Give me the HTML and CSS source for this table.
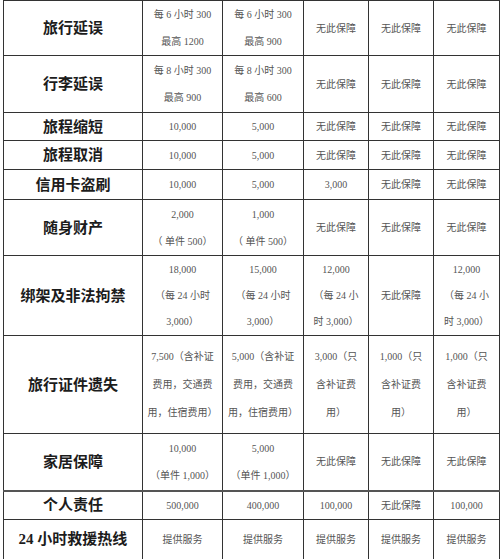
FILE: index.html
```html
<!DOCTYPE html>
<html lang="zh">
<head>
<meta charset="utf-8">
<link rel="stylesheet" href="styles.css">
</head>
<body>
<table class="plan">
  <colgroup>
    <col class="c1"><col class="c2"><col class="c3"><col class="c4"><col class="c5"><col class="c6">
  </colgroup>
  <tbody>
    <tr class="r1">
      <th>旅行延误</th>
      <td>每 6 小时 300<br>最高 1200</td>
      <td>每 6 小时 300<br>最高 900</td>
      <td>无此保障</td><td>无此保障</td><td>无此保障</td>
    </tr>
    <tr class="r2">
      <th>行李延误</th>
      <td>每 8 小时 300<br>最高 900</td>
      <td>每 8 小时 300<br>最高 600</td>
      <td>无此保障</td><td>无此保障</td><td>无此保障</td>
    </tr>
    <tr class="r3">
      <th>旅程缩短</th>
      <td>10,000</td><td>5,000</td>
      <td>无此保障</td><td>无此保障</td><td>无此保障</td>
    </tr>
    <tr class="r4">
      <th>旅程取消</th>
      <td>10,000</td><td>5,000</td>
      <td>无此保障</td><td>无此保障</td><td>无此保障</td>
    </tr>
    <tr class="r5">
      <th>信用卡盗刷</th>
      <td>10,000</td><td>5,000</td><td>3,000</td>
      <td>无此保障</td><td>无此保障</td>
    </tr>
    <tr class="r6">
      <th>随身财产</th>
      <td>2,000<br>（ 单件 500）</td>
      <td>1,000<br>（ 单件 500）</td>
      <td>无此保障</td><td>无此保障</td><td>无此保障</td>
    </tr>
    <tr class="r7">
      <th>绑架及非法拘禁</th>
      <td>18,000<br>（每 24 小时<br>3,000）</td>
      <td>15,000<br>（每 24 小时<br>3,000）</td>
      <td>12,000<br>（每 24 小<br>时 3,000）</td>
      <td>无此保障</td>
      <td>12,000<br>（每 24 小<br>时 3,000）</td>
    </tr>
    <tr class="r8">
      <th>旅行证件遗失</th>
      <td>7,500（含补证<br>费用，交通费<br>用，住宿费用）</td>
      <td>5,000（含补证<br>费用，交通费<br>用，住宿费用）</td>
      <td>3,000（只<br>含补证费<br>用）</td>
      <td>1,000（只<br>含补证费<br>用）</td>
      <td>1,000（只<br>含补证费<br>用）</td>
    </tr>
    <tr class="r9">
      <th>家居保障</th>
      <td>10,000<br>（单件 1,000）</td>
      <td>5,000<br>（单件 1,000）</td>
      <td>无此保障</td><td>无此保障</td><td>无此保障</td>
    </tr>
    <tr class="r10">
      <th>个人责任</th>
      <td>500,000</td><td>400,000</td><td>100,000</td>
      <td>无此保障</td><td>100,000</td>
    </tr>
    <tr class="r11">
      <th>24 小时救援热线</th>
      <td>提供服务</td><td>提供服务</td><td>提供服务</td><td>提供服务</td><td>提供服务</td>
    </tr>
  </tbody>
</table>
</body>
</html>
```

FILE: styles.css
```css
html, body {
  margin: 0;
  padding: 0;
  background: #ffffff;
}

.plan {
  margin-left: 3px;
  border-collapse: collapse;
  table-layout: fixed;
  width: 497px;
}

.c1 { width: 139px; }
.c2 { width: 80px; }
.c3 { width: 81px; }
.c4 { width: 65px; }
.c5 { width: 65px; }
.c6 { width: 66px; }

.plan th,
.plan td {
  border: 1px solid #333333;
  padding: 0;
  text-align: center;
  vertical-align: middle;
  overflow: hidden;
  white-space: nowrap;
}

.plan th {
  font-family: "Liberation Serif", "Noto Sans CJK SC", serif;
  font-weight: bold;
  font-size: 15px;
  color: #1c1c1c;
  line-height: 20px;
}

.plan td {
  font-family: "Liberation Serif", "Noto Sans CJK SC", serif;
  font-size: 10px;
  color: #555555;
  line-height: 27px;
}

.r1 { height: 55px; }
.r2 { height: 57px; }
.r3 { height: 26px; }
.r4 { height: 29px; }
.r5 { height: 30px; }
.r6 { height: 56px; }
.r7 { height: 80px; }
.r7 td { line-height: 26px; }
.r8 { height: 98px; }
.r8 td { line-height: 28px; }
.r9 { height: 57px; }
.r9 td, .r9 th { border-bottom: 2px solid #555555; }
.r10 { height: 27px; }
.r11 { height: 40px; }
```
